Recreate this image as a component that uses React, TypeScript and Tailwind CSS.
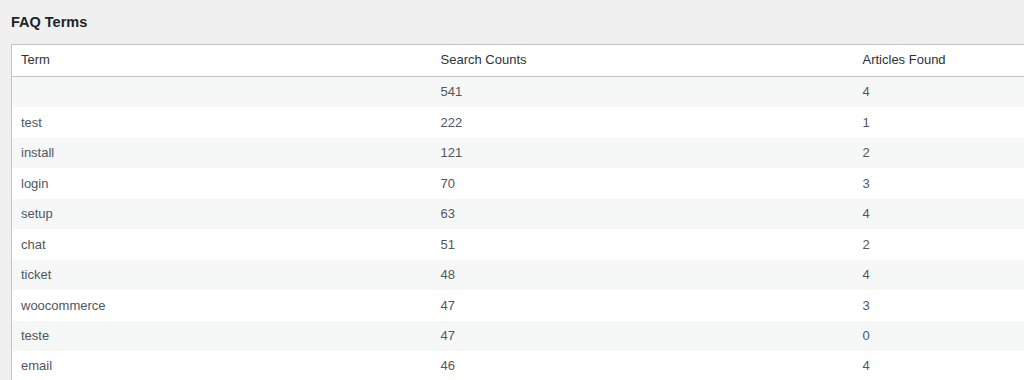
import React from 'react';

const rows: [string, number, number][] = [
  ['', 541, 4],
  ['test', 222, 1],
  ['install', 121, 2],
  ['login', 70, 3],
  ['setup', 63, 4],
  ['chat', 51, 2],
  ['ticket', 48, 4],
  ['woocommerce', 47, 3],
  ['teste', 47, 0],
  ['email', 46, 4],
];

export default function App() {
  return (
    <div className="w-[1024px] h-[380px] overflow-hidden bg-[#f0f0f1] font-['Liberation_Sans',Arial,sans-serif]">
      <h2 className="pl-[11px] pt-[13px] h-[44px] text-[14.5px] font-bold text-[#1d2327] leading-[18px]">
        FAQ Terms
      </h2>
      <table className="ml-[11px] w-[1264px] table-fixed border-collapse border border-[#c3c4c7] bg-white text-[13px]">
        <thead>
          <tr className="h-[32px] border-b border-[#c3c4c7]">
            <th className="w-[420px] pl-[9px] pr-[10px] pb-[1px] text-left font-normal text-[#2c3338]">Term</th>
            <th className="w-[422px] pl-[9px] pr-[10px] pb-[1px] text-left font-normal text-[#2c3338]">Search Counts</th>
            <th className="pl-[9px] pr-[10px] pb-[1px] text-left font-normal text-[#2c3338]">Articles Found</th>
          </tr>
        </thead>
        <tbody>
          {rows.map(([term, count, found], i) => (
            <tr key={i} className={`h-[30.5px] ${i % 2 === 0 ? 'bg-[#f6f7f7]' : 'bg-white'}`}>
              <td className="pl-[9px] pr-[10px] text-[#50575e]">{term}</td>
              <td className="pl-[9px] pr-[10px] text-[#50575e]">{count}</td>
              <td className="pl-[9px] pr-[10px] text-[#50575e]">{found}</td>
            </tr>
          ))}
        </tbody>
      </table>
    </div>
  );
}
